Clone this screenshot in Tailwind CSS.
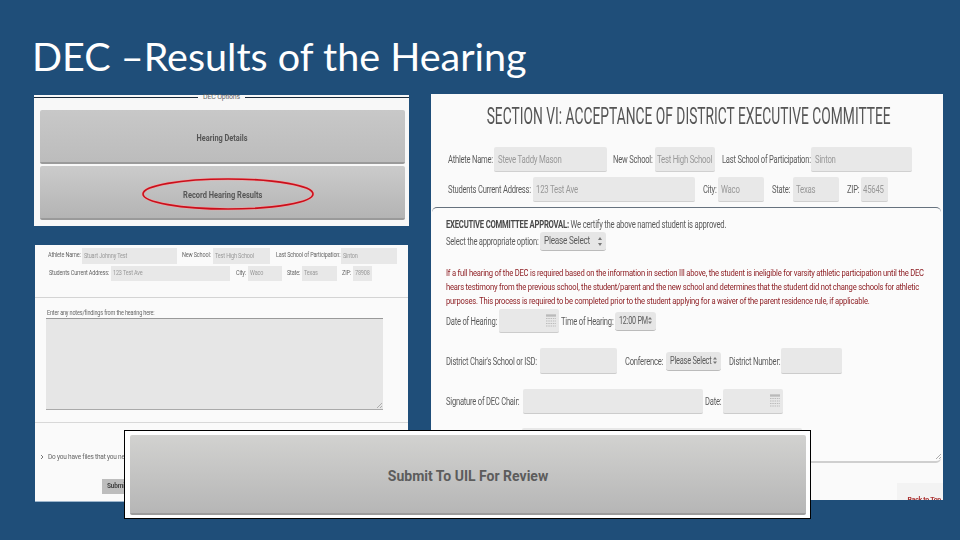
<!DOCTYPE html>
<html>
<head>
<meta charset="utf-8">
<script src="https://cdn.jsdelivr.net/npm/@tailwindcss/browser@4"></script>
</head>
<body class="m-0">
<main class="relative w-[960px] h-[540px] overflow-hidden bg-[#1f4e79] font-['Roboto',sans-serif]">
  <h1 class="absolute left-[32px] top-[32px] m-0 text-[39.5px] leading-[48px] font-normal text-white font-['Lato',sans-serif] whitespace-nowrap">DEC –Results of the Hearing</h1>

  <!-- DEC options picture -->
  <section class="absolute left-[34px] top-[95px] w-[375px] h-[131px] bg-[#f8f8f8] flex flex-col">
    <div class="flex items-center h-[5px] mb-[10px]">
      <div class="flex-1 h-[1px] bg-[#1a2a3a]"></div>
      <span class="px-[5px] text-[7px] leading-[5px] text-[#666] tracking-[-0.2px]">DEC Options</span>
      <div class="flex-1 h-[1px] bg-[#1a2a3a]"></div>
    </div>
    <div class="ml-[6px] mr-[4px] flex flex-col gap-[2px]">
      <div class="relative h-[54px] pt-[6px] rounded-[2px] bg-gradient-to-b from-[#c8c8c8] to-[#bcbcbc] border-b-2 border-[#9a9a9a] flex items-center justify-center text-[9px] font-bold text-[#565656]"><span class="scale-x-[0.82] blur-[0.3px]">Hearing Details</span></div>
      <div class="relative h-[54px] pt-[8px] rounded-[2px] bg-gradient-to-b from-[#cbcbcb] to-[#b4b4b4] border-b-2 border-[#9a9a9a] flex items-center justify-center text-[9px] font-bold text-[#565656]"><span class="scale-x-[0.83] blur-[0.3px]">Record Hearing Results</span>
        <svg class="absolute left-[101px] top-[11px]" width="174" height="34" viewBox="0 0 174 34"><ellipse cx="87" cy="17" rx="85" ry="15" fill="none" stroke="#f2a0a0" stroke-width="2.6"/><ellipse cx="87" cy="17" rx="85" ry="15" fill="none" stroke="#c8101c" stroke-width="1.6"/></svg>
      </div>
    </div>
  </section>

  <!-- Hearing notes picture -->
  <section class="absolute left-[35px] top-[245px] w-[373px] h-[256px] bg-[#fafafa] text-[#666] text-[6.5px] tracking-[-0.2px] shadow-[0_1px_0_#9db6cd] blur-[0.25px]">
    <div class="flex items-center h-[16px] mt-[3px] pl-[13px] whitespace-nowrap">
      <span class="w-[34px] origin-left scale-x-[0.85]">Athlete Name:</span>
      <span class="w-[95px] h-full bg-[#e8e8e8] pl-[2px] leading-[16px] text-[#999]"><span class="block origin-left scale-x-[0.85]">Stuart Johnny Test</span></span>
      <span class="w-[31px] ml-[5px] origin-left scale-x-[0.85]">New School:</span>
      <span class="w-[57px] h-full bg-[#e8e8e8] pl-[2px] leading-[16px] text-[#999]"><span class="block origin-left scale-x-[0.85]">Test High School</span></span>
      <span class="w-[65px] ml-[6px] origin-left scale-x-[0.85]">Last School of Participation:</span>
      <span class="w-[56px] h-full bg-[#e8e8e8] pl-[2px] leading-[16px] text-[#999]"><span class="block origin-left scale-x-[0.85]">Sinton</span></span>
    </div>
    <div class="flex items-center h-[15px] mt-[2px] pl-[14px] whitespace-nowrap">
      <span class="w-[62px] origin-left scale-x-[0.85]">Students Current Address:</span>
      <span class="w-[119px] h-full bg-[#e8e8e8] pl-[2px] leading-[15px] text-[#999]"><span class="block origin-left scale-x-[0.85]">123 Test Ave</span></span>
      <span class="w-[12px] ml-[6px] origin-left scale-x-[0.85]">City:</span>
      <span class="w-[34px] h-full bg-[#e8e8e8] pl-[2px] leading-[15px] text-[#999]"><span class="block origin-left scale-x-[0.85]">Waco</span></span>
      <span class="w-[15px] ml-[5px] origin-left scale-x-[0.85]">State:</span>
      <span class="w-[35px] h-full bg-[#e8e8e8] pl-[2px] leading-[15px] text-[#999]"><span class="block origin-left scale-x-[0.85]">Texas</span></span>
      <span class="w-[11px] ml-[5px] origin-left scale-x-[0.85]">ZIP:</span>
      <span class="w-[19px] h-full bg-[#e8e8e8] pl-[2px] leading-[15px] text-[#999]"><span class="block origin-left scale-x-[0.85]">78908</span></span>
    </div>
    <div class="h-[1px] bg-[#d4d4d4] mt-[16px]"></div>
    <p class="m-0 mt-[12px] ml-[12px] leading-[7px] whitespace-nowrap origin-left scale-x-[0.85]">Enter any notes/findings from the hearing here:</p>
    <div class="relative ml-[11px] mt-[1px] w-[337px] h-[92px] bg-[#e6e6e6] border-t border-[#999] border-b border-b-[#aaa]">
      <svg class="absolute right-[1px] bottom-[1px]" width="5" height="5" viewBox="0 0 5 5"><path d="M0 5 5 0M3 5 5 3" stroke="#888" stroke-width=".6"/></svg>
    </div>
    <div class="h-[1px] bg-[#d8d8d8] mt-[12px]"></div>
    <div class="flex items-center mt-[31px] ml-[5px] h-[8px] whitespace-nowrap">
      <svg width="4" height="6" viewBox="0 0 4 6" class="mr-[4px] -mt-[3px]"><path d="M1 1 3 3 1 5" fill="none" stroke="#555" stroke-width=".8"/></svg>
      <span>Do you have files that you need to upload?</span>
    </div>
    <div class="ml-[67px] mt-[17px] w-[40px] h-[15px] bg-[#bdbdbd] text-[6.5px] font-bold leading-[15px] pl-[5px] text-[#444]">Submit</div>
  </section>

  <!-- Section VI picture -->
  <section class="absolute left-[431px] top-[94px] w-[512px] h-[406px] bg-[#fafafa] text-[#5c5c5c] text-[10px] tracking-[-0.3px] overflow-hidden blur-[0.25px]">
    <h2 class="m-0 mt-[12px] h-[22px] flex justify-center pl-[3px]"><span class="block whitespace-nowrap text-[23px] leading-[22px] font-normal tracking-normal text-[#555] scale-x-[0.6]">SECTION VI: ACCEPTANCE OF DISTRICT EXECUTIVE COMMITTEE</span></h2>
    <div class="flex items-center h-[25px] mt-[19px] pl-[17px] whitespace-nowrap">
      <span class="w-[46px] origin-left scale-x-[0.76]">Athlete Name:</span>
      <span class="w-[113px] h-full bg-[#e8e8e8] pl-[4px] leading-[25px] text-[#999] border-b border-[#d0d0d0] rounded-[2px]"><span class="block origin-left scale-x-[0.78]">Steve Taddy Mason</span></span>
      <span class="w-[42px] ml-[6px] origin-left scale-x-[0.76]">New School:</span>
      <span class="w-[60px] h-full bg-[#e8e8e8] pl-[2px] leading-[25px] text-[#999] border-b border-[#d0d0d0] rounded-[2px]"><span class="block origin-left scale-x-[0.78]">Test High School</span></span>
      <span class="w-[89px] ml-[7px] origin-left scale-x-[0.76]">Last School of Participation:</span>
      <span class="w-[101px] h-full bg-[#e8e8e8] pl-[4px] leading-[25px] text-[#999] border-b border-[#d0d0d0] rounded-[2px]"><span class="block origin-left scale-x-[0.78]">Sinton</span></span>
    </div>
    <div class="flex items-center h-[25px] mt-[5px] pl-[17px] whitespace-nowrap">
      <span class="w-[85px] origin-left scale-x-[0.76]">Students Current Address:</span>
      <span class="w-[162px] h-full bg-[#e8e8e8] pl-[3px] leading-[25px] text-[#999] border-b border-[#d0d0d0] rounded-[2px]"><span class="block origin-left scale-x-[0.78]">123 Test Ave</span></span>
      <span class="w-[15px] ml-[8px] origin-left scale-x-[0.76]">City:</span>
      <span class="w-[46px] h-full bg-[#e8e8e8] pl-[3px] leading-[25px] text-[#999] border-b border-[#d0d0d0] rounded-[2px]"><span class="block origin-left scale-x-[0.78]">Waco</span></span>
      <span class="w-[21px] ml-[8px] origin-left scale-x-[0.76]">State:</span>
      <span class="w-[46px] h-full bg-[#e8e8e8] pl-[3px] leading-[25px] text-[#999] border-b border-[#d0d0d0] rounded-[2px]"><span class="block origin-left scale-x-[0.78]">Texas</span></span>
      <span class="w-[14px] ml-[8px] origin-left scale-x-[0.76]">ZIP:</span>
      <span class="w-[27px] h-full bg-[#e8e8e8] pl-[2px] leading-[25px] text-[#999] border-b border-[#d0d0d0] rounded-[2px]"><span class="block origin-left scale-x-[0.78]">45645</span></span>
    </div>
    <div class="relative mt-[5px] ml-[1px] w-[509px] h-[256px] rounded-[5px] border-t border-t-[#66727e] border-b-2 border-b-[#cfcfcf] bg-[#fbfbfb] pl-[14px]">
      <p class="m-0 mt-[11px] h-[12px] leading-[12px] whitespace-nowrap origin-left scale-x-[0.77]"><b class="text-[#4a4a4a]">EXECUTIVE COMMITTEE APPROVAL:</b> We certify the above named student is approved.</p>
      <div class="flex items-center h-[19px] mt-[1px] whitespace-nowrap">
        <span class="w-[94px] origin-left scale-x-[0.76]">Select the appropriate option:</span>
        <span class="flex items-center justify-between w-[66px] h-full px-[4px] bg-[#e6e6e6] border-b border-[#bbb] rounded-[3px] text-[10.5px]"><span class="block w-[48px] origin-left scale-x-[0.78]">Please Select</span>
          <svg width="4" height="9" viewBox="0 0 4 9"><path d="M2 0 4 3H0ZM2 9 4 6H0Z" fill="#777"/></svg></span>
      </div>
      <p class="m-0 mt-[15px] w-[598px] text-[9.4px] leading-[14px] tracking-[-0.25px] text-[#8e1f24] origin-left scale-x-[0.812]">If a full hearing of the DEC is required based on the information in section III above, the student is ineligible for varsity athletic participation until the DEC hears testimony from the previous school, the student/parent and the new school and determines that the student did not change schools for athletic purposes. This process is required to be completed prior to the student applying for a waiver of the parent residence rule, if applicable.</p>
      <div class="flex items-center h-[24px] mt-[1px] whitespace-nowrap">
        <span class="w-[53px] origin-left scale-x-[0.76]">Date of Hearing:</span>
        <span class="flex items-center justify-end w-[60px] h-full pr-[3px] bg-[#e8e8e8] border-b border-[#ccc] rounded-[2px]">
          <svg width="10" height="14" viewBox="0 0 10 14"><path d="M0 1H10M0 2H10" stroke="#aaa"/><path d="M0 4.5H10M0 7H10M0 9.5H10M0 12H10" stroke="#bbb" stroke-dasharray="1.5 .8"/></svg></span>
        <span class="w-[54px] ml-[2px] origin-left scale-x-[0.76]">Time of Hearing:</span>
        <span class="flex items-center justify-between w-[41px] h-[19px] px-[4px] bg-[#e6e6e6] border-b border-[#bbb] rounded-[3px]"><span class="block w-[28px] origin-left scale-x-[0.72]">12:00 PM</span>
          <svg width="4" height="9" viewBox="0 0 4 9"><path d="M2 1 4 3.5H0ZM2 8 4 5.5H0Z" fill="#777"/></svg></span>
      </div>
      <div class="flex items-center h-[26px] mt-[15px] whitespace-nowrap">
        <span class="w-[94px] origin-left scale-x-[0.76]">District Chair's School or ISD:</span>
        <span class="w-[77px] h-full bg-[#e8e8e8] border-b border-[#ccc] rounded-[2px]"></span>
        <span class="w-[41px] ml-[8px] origin-left scale-x-[0.76]">Conference:</span>
        <span class="flex items-center justify-between w-[55px] h-[19px] px-[4px] bg-[#e6e6e6] border-b border-[#bbb] rounded-[3px]"><span class="block w-[42px] origin-left scale-x-[0.74]">Please Select</span>
          <svg width="4" height="9" viewBox="0 0 4 9"><path d="M2 1 4 3.5H0ZM2 8 4 5.5H0Z" fill="#777"/></svg></span>
        <span class="w-[52px] ml-[8px] origin-left scale-x-[0.76]">District Number:</span>
        <span class="w-[61px] h-full bg-[#e8e8e8] border-b border-[#ccc] rounded-[2px]"></span>
      </div>
      <div class="flex items-center h-[25px] mt-[15px] whitespace-nowrap">
        <span class="w-[77px] origin-left scale-x-[0.76]">Signature of DEC Chair:</span>
        <span class="w-[180px] h-full bg-[#e8e8e8] border-b border-[#ccc] rounded-[2px]"></span>
        <span class="w-[18px] ml-[2px] origin-left scale-x-[0.76]">Date:</span>
        <span class="flex items-center justify-end w-[60px] h-full pr-[3px] bg-[#e8e8e8] border-b border-[#ccc] rounded-[2px]">
          <svg width="10" height="14" viewBox="0 0 10 14"><path d="M0 1H10M0 2H10" stroke="#aaa"/><path d="M0 4.5H10M0 7H10M0 9.5H10M0 12H10" stroke="#bbb" stroke-dasharray="1.5 .8"/></svg></span>
      </div>
      <div class="ml-[76px] mt-[14px] w-[280px] h-[25px] bg-[#e8e8e8] rounded-[2px]"></div>
      <svg class="absolute right-0 bottom-[2px]" width="5" height="5" viewBox="0 0 5 5"><path d="M0 5 5 0M3 5 5 3" stroke="#777" stroke-width=".6"/></svg>
    </div>
    <div class="absolute right-0 bottom-0 w-[46px] h-[17px] bg-[#f3f3f3] text-[#a33] text-[7px] font-bold text-right pr-[2px] pt-[14px] leading-[7px]">Back to Top</div>
  </section>

  <!-- Submit overlay -->
  <section class="absolute left-[124px] top-[430px] w-[687px] h-[89px] bg-white border border-black pt-[4px] pl-[5px] pr-[4px]">
    <div class="h-[80px] pt-[4px] rounded-[2px] bg-gradient-to-b from-[#d2d2d0] to-[#b6b6b6] border-b-2 border-[#9c9c9c] flex items-center justify-center text-[14px] font-bold text-[#5c5c5c]">Submit To UIL For Review</div>
  </section>
</main>
</body>
</html>
